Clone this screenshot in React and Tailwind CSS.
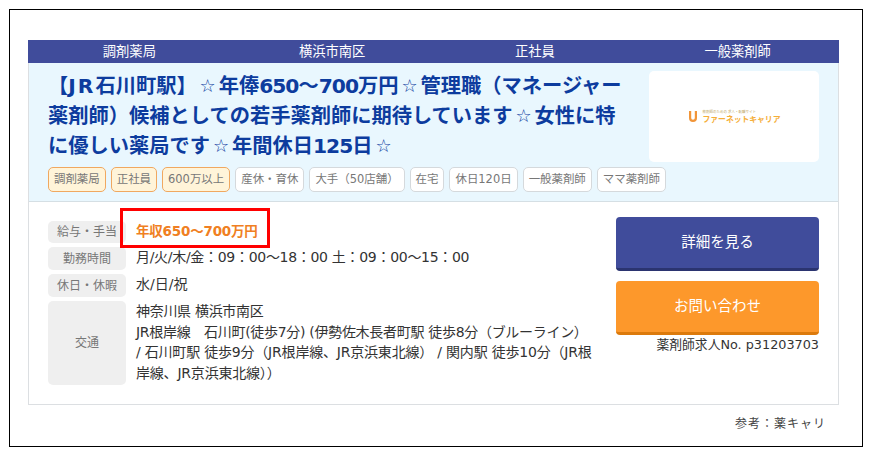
import React from 'react';

const headerItems = ['調剤薬局', '横浜市南区', '正社員', '一般薬剤師'];

const tags = [
    { label: '調剤薬局', on: true },
    { label: '正社員', on: true },
    { label: '600万以上', on: true },
    { label: '産休・育休' },
    { label: '大手（50店舗）' },
    { label: '在宅' },
    { label: '休日120日' },
    { label: '一般薬剤師' },
    { label: 'ママ薬剤師' },
];

const Label = ({ children, className = '' }) => (
    <div className={`w-[78px] shrink-0 rounded-[5px] bg-[#efefef] flex items-center justify-center text-[12px] text-[#777777] ${className}`}>
        {children}
    </div>
);

// small star centred in a full-width cell
const Star = () => (
    <span className="inline-block w-[22px] text-center text-[18px] leading-none font-normal align-[1px]">☆</span>
);

const Num = ({ children }) => <span className="tracking-[-1px]">{children}</span>;

const Logo = () => (
    <div className="w-[170px] h-[91px] shrink-0 rounded-[5px] bg-white flex items-center justify-center">
        <div className="flex items-center gap-[5px] opacity-90">
            <svg width="10" height="13" viewBox="0 0 10 13">
                <path d="M1 1v7a4 4 0 0 0 8 0V1H6.8v7a1.8 1.8 0 0 1-3.6 0V1z" fill="#f08a24" />
            </svg>
            <div className="flex flex-col items-start w-[78px]">
                <span className="text-[3.5px] leading-[5px] text-[#b59a50] whitespace-nowrap">薬剤師のための 求人・転職サイト</span>
                <span className="text-[7.8px] leading-[9px] font-bold text-[#f5a623] whitespace-nowrap">ファーネットキャリア</span>
            </div>
        </div>
    </div>
);

export default function App() {
    return (
        <div className="w-[873px] h-[458px] p-[9px] bg-white" style={{ fontFamily: '"DejaVu Sans", "Noto Sans CJK JP", sans-serif' }}>
            <div className="relative w-[854px] h-[438px] border border-black pt-[30px] pl-[18px]">
                <div className="w-[811px] h-[365px] border border-t-0 border-[#dcdfe2]">
                    <div className="h-[23px] -mx-px bg-[#404c9b] grid grid-cols-4 items-center text-center text-[13.3px] text-white">
                        {headerItems.map((item) => (
                            <span key={item}>{item}</span>
                        ))}
                    </div>

                    <div className="h-[139px] bg-[#e9f7fe] border-b border-[#d5dfe4] pl-[19px] pr-[19px] pt-[8px]">
                        <div className="flex justify-between">
                            <h1 className="w-[580px] text-[20.25px] leading-[30px] font-bold text-[#0d3c9e]">
                                【<span className="tracking-[2px]">JR</span>石川町駅】<Star />年俸<Num>650</Num>～<Num>700</Num>万円<Star />管理職（マネージャー薬剤師）候補としての若手薬剤師に期待しています<Star />女性に特に優しい薬局です<Star />年間休日<Num>125</Num>日<Star />
                            </h1>
                            <Logo />
                        </div>
                        <div className="flex gap-[5px] mt-[5px]">
                            {tags.map((tag) => (
                                <span
                                    key={tag.label}
                                    className={`h-[25px] px-[5px] flex items-center rounded-[5px] border text-[11.45px] text-[#777777] whitespace-nowrap ${tag.on ? 'bg-[#fff4d9] border-[#f0a860]' : 'bg-white border-[#d5d9dc]'}`}
                                >
                                    {tag.label}
                                </span>
                            ))}
                        </div>
                    </div>

                    <div className="flex pl-[19px] pr-[19px]">
                        <div className="w-[548px] pt-[19px] flex flex-col gap-[4px] text-[14px] text-[#333333]">
                            <div className="flex gap-[10px]">
                                <Label className="h-[22px]">給与・手当</Label>
                                <span className="leading-[20px] font-bold text-[#f07f22] text-[13.5px] tracking-[-0.2px]">年収650～700万円</span>
                            </div>
                            <div className="flex gap-[10px]">
                                <Label className="h-[23px]">勤務時間</Label>
                                <span className="leading-[21px] tracking-[-0.3px]">月/火/木/金：09：00～18：00 土：09：00～15：00</span>
                            </div>
                            <div className="flex gap-[10px]">
                                <Label className="h-[23px]">休日・休暇</Label>
                                <span className="leading-[21px]">水/日/祝</span>
                            </div>
                            <div className="flex gap-[10px]">
                                <Label className="h-[84px]">交通</Label>
                                <p className="leading-[20.6px] w-[462px] tracking-[-0.3px]">
                                    神奈川県 横浜市南区<br />
                                    JR根岸線　石川町(徒歩7分) (伊勢佐木長者町駅 徒歩8分（ブルーライン）<br />
                                    <span className="tracking-[-0.2px]">/ 石川町駅 徒歩9分（JR根岸線、JR京浜東北線） / 関内駅 徒歩10分（JR根岸線、JR京浜東北線））</span>
                                </p>
                            </div>
                        </div>

                        <div className="w-[204px] ml-[20px] pt-[15px] flex flex-col">
                            <div className="h-[54px] rounded-[4px] bg-[#404c9b] border-b-[3px] border-[#2b3470] flex items-center justify-center text-[14.5px] text-white">
                                詳細を見る
                            </div>
                            <div className="h-[54px] mt-[10px] rounded-[4px] bg-[#fd982b] border-b-[3px] border-[#dc7a0c] flex items-center justify-center text-[14.5px] text-white">
                                お問い合わせ
                            </div>
                            <p className="mt-px text-right text-[12.8px] leading-[18px] text-[#333333]">薬剤師求人No. p31203703</p>
                        </div>
                    </div>
                </div>

                <p className="mt-[10px] w-[798px] text-right text-[12px] tracking-[1px] text-[#444444]">参考：薬キャリ</p>

                <div className="absolute left-[110px] top-[198px] w-[150px] h-[40px] border-[3px] border-[#ff0000]" />
            </div>
        </div>
    );
}
